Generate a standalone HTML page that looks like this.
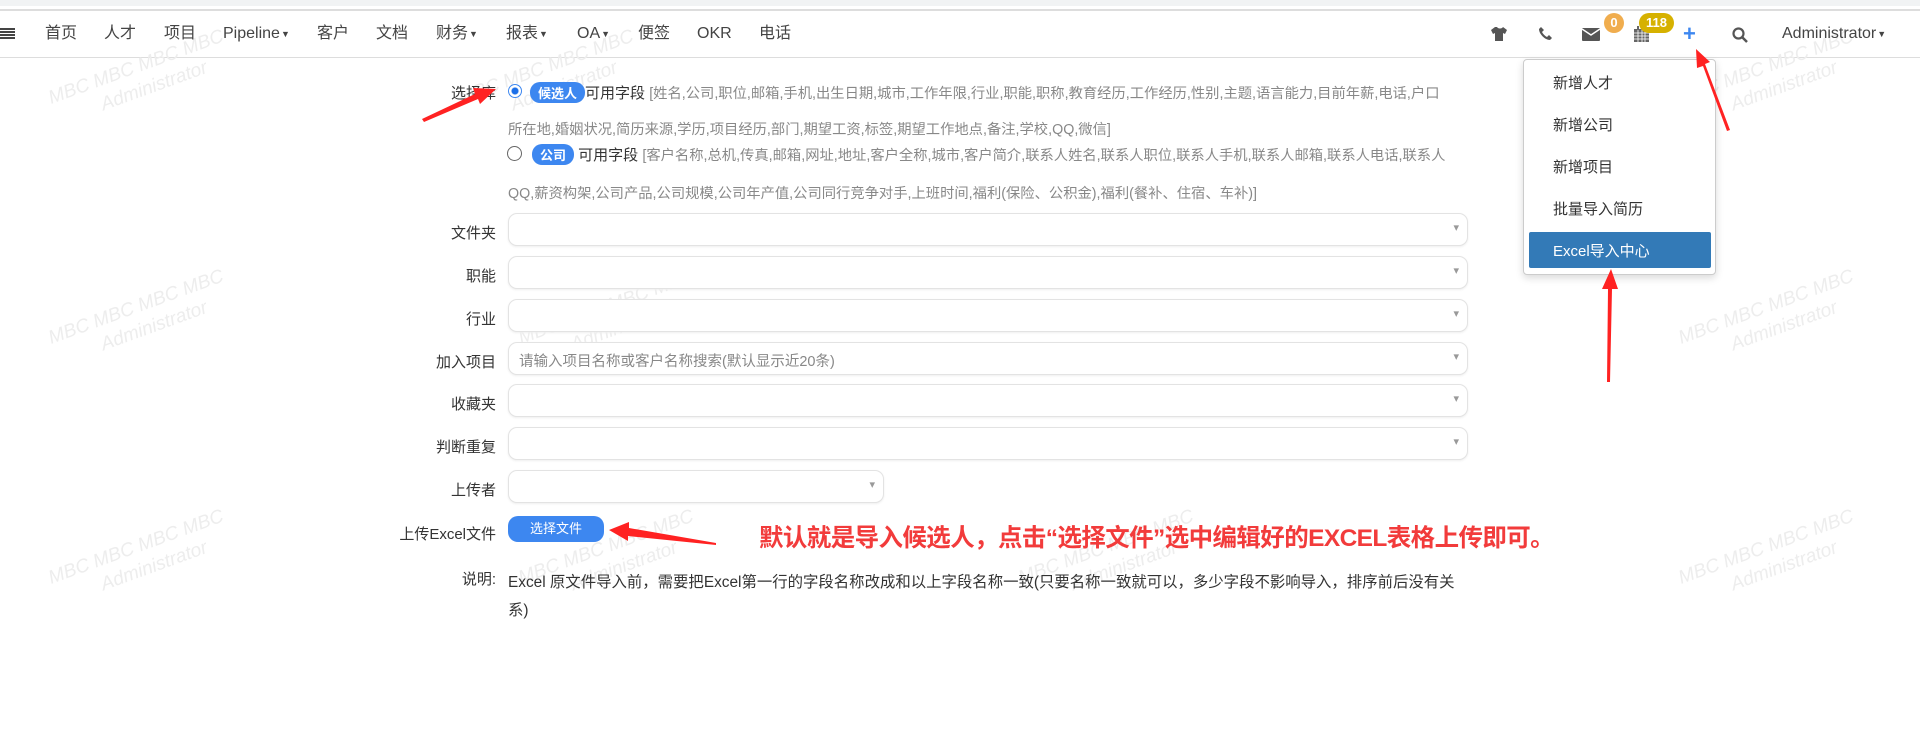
<!DOCTYPE html>
<html><head><meta charset="utf-8"><style>
body{margin:0;width:1920px;height:734px;background:#fff;font-family:"Liberation Sans","Noto Sans CJK SC",sans-serif;position:relative;overflow:hidden;color:#333}
.a{position:absolute;white-space:nowrap}
.nav{font-size:16px;color:#444;top:24px;height:20px;line-height:20px;display:flex;align-items:center}
.car{font-size:9px;margin-left:1px}
.lbl{font-size:15px;color:#333;right:1424px;text-align:right}
.inp{position:absolute;left:508px;width:958px;height:31px;border:1px solid #e3e3e3;border-radius:9px;box-shadow:0 1px 2px #eee;background:#fff}
.inp:after{content:"▾";position:absolute;right:8px;top:7px;font-size:11px;color:#999}
.g{font-size:14.3px;color:#888}
.wm{position:absolute;color:#ededed;font-style:italic;font-size:19px;transform:rotate(-20deg);text-align:center;line-height:24px;white-space:nowrap}
.pill{display:inline-block;background:#3d87f0;color:#fff;border-radius:10px;padding:1px 8px;font-size:13px;font-weight:bold}
.dd{font-size:15px;color:#333;left:1553px}
</style></head><body>
<div class="a" style="left:0;top:0;width:1920px;height:6px;background:#f1f3f4"></div>
<div class="a" style="left:0;top:9px;width:1920px;height:2px;background:#ddd"></div>
<div class="a" style="left:0;top:57px;width:1920px;height:1px;background:#ddd"></div>
<div class="wm" style="left:48px;top:55px">MBC MBC MBC MBC<br>&nbsp;&nbsp;&nbsp;&nbsp;Administrator</div>
<div class="wm" style="left:458px;top:55px">MBC MBC MBC MBC<br>&nbsp;&nbsp;&nbsp;&nbsp;Administrator</div>
<div class="wm" style="left:1678px;top:55px">MBC MBC MBC MBC<br>&nbsp;&nbsp;&nbsp;&nbsp;Administrator</div>
<div class="wm" style="left:48px;top:295px">MBC MBC MBC MBC<br>&nbsp;&nbsp;&nbsp;&nbsp;Administrator</div>
<div class="wm" style="left:518px;top:295px">MBC MBC MBC MBC<br>&nbsp;&nbsp;&nbsp;&nbsp;Administrator</div>
<div class="wm" style="left:1678px;top:295px">MBC MBC MBC MBC<br>&nbsp;&nbsp;&nbsp;&nbsp;Administrator</div>
<div class="wm" style="left:48px;top:535px">MBC MBC MBC MBC<br>&nbsp;&nbsp;&nbsp;&nbsp;Administrator</div>
<div class="wm" style="left:518px;top:535px">MBC MBC MBC MBC<br>&nbsp;&nbsp;&nbsp;&nbsp;Administrator</div>
<div class="wm" style="left:1018px;top:535px">MBC MBC MBC MBC<br>&nbsp;&nbsp;&nbsp;&nbsp;Administrator</div>
<div class="wm" style="left:1678px;top:535px">MBC MBC MBC MBC<br>&nbsp;&nbsp;&nbsp;&nbsp;Administrator</div>

<div class="a" style="left:0;top:28px;width:15px;height:11px;background:repeating-linear-gradient(#444 0 2px,transparent 2px 3px)"></div>
<div class="a nav" style="left:45px">首页</div>
<div class="a nav" style="left:104px">人才</div>
<div class="a nav" style="left:164px">项目</div>
<div class="a nav" style="left:223px">Pipeline<span class="car">▼</span></div>
<div class="a nav" style="left:317px">客户</div>
<div class="a nav" style="left:376px">文档</div>
<div class="a nav" style="left:436px">财务<span class="car">▼</span></div>
<div class="a nav" style="left:506px">报表<span class="car">▼</span></div>
<div class="a nav" style="left:577px">OA<span class="car">▼</span></div>
<div class="a nav" style="left:638px">便签</div>
<div class="a nav" style="left:697px">OKR</div>
<div class="a nav" style="left:759px">电话</div>

<svg class="a" style="left:1490px;top:26px" width="18" height="16" viewBox="0 0 18 16"><path d="M5 1L1 4l2 4 2-1v8h8V7l2 1 2-4-4-3c-1 2-5 2-6 0z" fill="#555"/></svg>
<svg class="a" style="left:1538px;top:26px" width="15" height="15" viewBox="0 0 15 15"><path d="M3 1l3 3-2 2c1 2 3 4 5 5l2-2 3 3-2 2C7 14 1 8 1 3z" fill="#555"/></svg>
<svg class="a" style="left:1582px;top:28px" width="18" height="13" viewBox="0 0 18 13"><rect width="18" height="13" rx="1" fill="#555"/><path d="M0 1l9 6 9-6" stroke="#fff" stroke-width="1.5" fill="none"/></svg>
<div class="a" style="left:1604px;top:13px;width:20px;height:20px;border-radius:10px;background:#f0ad4e;color:#fff;font-size:13px;font-weight:bold;text-align:center;line-height:20px">0</div>
<svg class="a" style="left:1634px;top:26px" width="15" height="16" viewBox="0 0 15 16"><rect x="0" y="3" width="15" height="13" fill="#666"/><path d="M0 7h15M0 10h15M0 13h15M4 3v13M8 3v13M11 3v13" stroke="#fff" stroke-width=".8"/><rect x="3" y="0" width="2" height="4" fill="#666"/></svg>
<div class="a" style="left:1639px;top:13px;width:35px;height:20px;border-radius:10px;background:#d6b100;color:#fff;font-size:13px;font-weight:bold;text-align:center;line-height:20px">118</div>
<div class="a" style="left:1683px;top:21px;font-size:22px;font-weight:bold;color:#3d87f0">+</div>
<svg class="a" style="left:1732px;top:27px" width="16" height="16" viewBox="0 0 16 16"><circle cx="6.5" cy="6.5" r="5" stroke="#555" stroke-width="2.2" fill="none"/><path d="M10 10l5 5" stroke="#555" stroke-width="2.5"/></svg>
<div class="a nav" style="left:1782px">Administrator<span class="car">▼</span></div>

<div class="a" style="left:1523px;top:59px;width:191px;height:214px;border:1px solid #ccc;border-radius:4px;background:#fff;box-shadow:0 3px 8px rgba(0,0,0,.15)"></div>
<div class="a dd" style="top:72px">新增人才</div>
<div class="a dd" style="top:114px">新增公司</div>
<div class="a dd" style="top:156px">新增项目</div>
<div class="a dd" style="top:198px">批量导入简历</div>
<div class="a" style="left:1529px;top:232px;width:182px;height:36px;background:#337ab7;border-radius:2px"></div>
<div class="a dd" style="top:240px;color:#fff">Excel导入中心</div>

<div class="a lbl" style="top:82px">选择库</div>
<div class="a" style="left:508px;top:84px;width:12px;height:12px;border-radius:7px;border:1px solid #3d87f0;background:radial-gradient(#1a6ee8 3px,#fff 4px)"></div>
<div class="a" style="left:530px;top:82px;font-size:15px"><span class="pill">候选人</span>可用字段 <span class="g">[姓名,公司,职位,邮箱,手机,出生日期,城市,工作年限,行业,职能,职称,教育经历,工作经历,性别,主题,语言能力,目前年薪,电话,户口</span></div>
<div class="a g" style="left:508px;top:118px">所在地,婚姻状况,简历来源,学历,项目经历,部门,期望工资,标签,期望工作地点,备注,学校,QQ,微信]</div>
<div class="a" style="left:507px;top:146px;width:13px;height:13px;border-radius:8px;border:1px solid #666"></div>
<div class="a" style="left:532px;top:144px;font-size:15px"><span class="pill">公司</span> 可用字段 <span class="g">[客户名称,总机,传真,邮箱,网址,地址,客户全称,城市,客户简介,联系人姓名,联系人职位,联系人手机,联系人邮箱,联系人电话,联系人</span></div>
<div class="a g" style="left:508px;top:182px">QQ,薪资构架,公司产品,公司规模,公司年产值,公司同行竞争对手,上班时间,福利(保险、公积金),福利(餐补、住宿、车补)]</div>

<div class="a lbl" style="top:222px">文件夹</div><div class="inp" style="top:213px"></div>
<div class="a lbl" style="top:265px">职能</div><div class="inp" style="top:256px"></div>
<div class="a lbl" style="top:308px">行业</div><div class="inp" style="top:299px"></div>
<div class="a lbl" style="top:351px">加入项目</div><div class="inp" style="top:342px"></div>
<div class="a g" style="left:519px;top:350px;font-size:14.5px">请输入项目名称或客户名称搜索(默认显示近20条)</div>
<div class="a lbl" style="top:393px">收藏夹</div><div class="inp" style="top:384px"></div>
<div class="a lbl" style="top:436px">判断重复</div><div class="inp" style="top:427px"></div>
<div class="a lbl" style="top:479px">上传者</div><div class="inp" style="top:470px;width:374px"></div>
<div class="a lbl" style="top:523px">上传Excel文件</div>
<div class="a" style="left:508px;top:516px;width:96px;height:26px;border-radius:10px;background:#3d87f0;color:#fff;font-size:13px;text-align:center;line-height:26px">选择文件</div>
<div class="a" style="left:759px;top:519px;font-size:24.5px;color:#f23b3b;font-weight:bold;letter-spacing:-0.6px">默认就是导入候选人，点击“选择文件”选中编辑好的EXCEL表格上传即可。</div>
<div class="a lbl" style="top:568px">说明:</div>
<div class="a" style="left:508px;top:570px;font-size:15.4px">Excel 原文件导入前，需要把Excel第一行的字段名称改成和以上字段名称一致(只要名称一致就可以，多少字段不影响导入，排序前后没有关</div>
<div class="a" style="left:508px;top:598px;font-size:15.4px">系)</div>

<svg class="a" style="left:0;top:0" width="1920" height="734">
<g fill="#f22">
<polygon points="422,119 475,94 473,88 496,89 480,104 478,99 424,122"/>
<polygon points="1727,131 1703,66 1697,68 1696,49 1710,62 1705,64 1730,130"/>
<polygon points="1607,382 1608,289 1602,289 1611,269 1618,289 1612,289 1610,382"/>
<polygon points="716,545 628,536 628,541 609,530 629,522 629,528 716,543"/>
</g></svg>
</body></html>
